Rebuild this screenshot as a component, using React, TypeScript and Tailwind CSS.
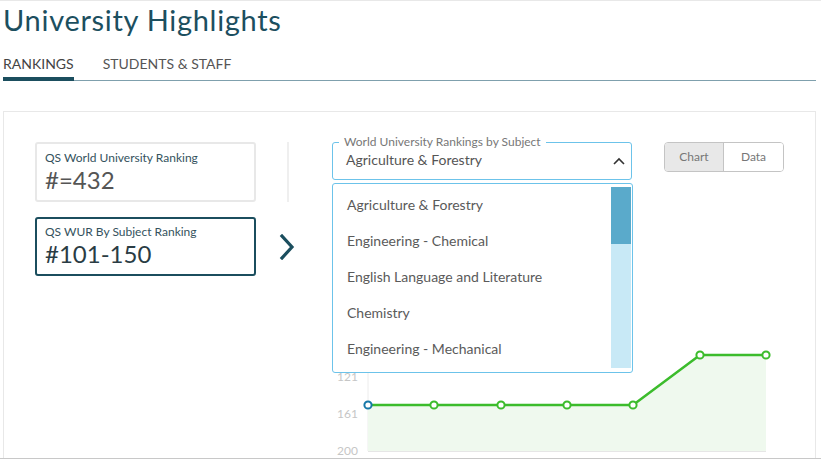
import { useState } from "react";

/* ------------------------------------------------------------------ */
/*  Data                                                               */
/* ------------------------------------------------------------------ */

const SUBJECTS = [
  "Agriculture & Forestry",
  "Engineering - Chemical",
  "English Language and Literature",
  "Chemistry",
  "Engineering - Mechanical",
];

const POINTS = [
  { x: 36, y: 215 },
  { x: 102, y: 215 },
  { x: 169, y: 215 },
  { x: 235, y: 215 },
  { x: 301, y: 215 },
  { x: 368, y: 165 },
  { x: 434, y: 165 },
];

const Y_LABELS = [
  { v: "1", y: 76 },
  { v: "41", y: 113 },
  { v: "81", y: 150 },
  { v: "121", y: 187 },
  { v: "161", y: 224 },
  { v: "200", y: 261 },
];

/* ------------------------------------------------------------------ */
/*  Component                                                          */
/* ------------------------------------------------------------------ */

export default function App() {
  const [tab, setTab] = useState("rankings");
  const [view, setView] = useState<"chart" | "data">("chart");
  const [subject, setSubject] = useState(SUBJECTS[0]);

  return (
    <div
      className="relative h-[459px] w-[821px] overflow-hidden border-t border-b border-t-[#e8e8e8] border-b-[#c8c8c8] bg-white"
      style={{ fontFamily: "Lato, 'Open Sans', sans-serif" }}
    >
      {/* Header */}
      <h1 className="pl-[3px] pt-[2px] text-[29px] leading-[34px] tracking-[0.7px] text-[#1c4f5f]">
        University Highlights
      </h1>

      {/* Tabs */}
      <div className="ml-[3px] mr-[5px] mt-[18px] flex border-b border-[#7fa0ad]">
        <TabBtn active={tab === "rankings"} onClick={() => setTab("rankings")}>
          RANKINGS
        </TabBtn>
        <div className="w-[29px]" />
        <TabBtn active={tab === "staff"} onClick={() => setTab("staff")}>
          STUDENTS &amp; STAFF
        </TabBtn>
      </div>

      {/* Panel */}
      <div className="ml-[3px] mt-[30px] h-[400px] w-[813px] border border-[#e8e8e8] px-[31px] pt-[30px]">
        <div className="flex">
          {/* Ranking cards */}
          <div className="flex w-[222px] flex-col gap-[15px]">
            <div className="h-[60px] rounded-[3px] border-2 border-[#e8e8e8] px-[8px] pt-[6px]">
              <div className="text-[12px] leading-[16px] text-[#34525d]">
                QS World University Ranking
              </div>
              <div className="text-[24px] leading-[28px] text-[#555]">#=432</div>
            </div>
            <div className="h-[59px] rounded-[3px] border-2 border-[#1b4e5e] px-[8px] pt-[5px]">
              <div className="text-[12px] leading-[16px] text-[#34525d]">
                QS WUR By Subject Ranking
              </div>
              <div className="text-[24px] leading-[28px] text-[#2a3c44]">#101-150</div>
            </div>
          </div>

          {/* Divider + arrow */}
          <div className="flex w-[76px] flex-col">
            <div className="ml-[31px] h-[60px] w-[2px] bg-[#efefef]" />
            <svg
              className="ml-[22px] mt-[32px]"
              width="18"
              height="26"
              viewBox="0 0 18 26"
              fill="none"
            >
              <path
                d="M4 2 L14 13 L4 24"
                stroke="#1b4e5e"
                strokeWidth="3.2"
                strokeLinecap="square"
              />
            </svg>
          </div>

          {/* Right column */}
          <div className="relative flex flex-1 flex-col">
            <div className="flex items-start justify-between">
              {/* Select */}
              <div className="relative h-[38px] w-[300px] rounded-[3px] border border-[#6cc3ea] px-[13px] pt-[8px]">
                <span className="absolute -top-[9px] left-[6px] bg-white px-[5px] text-[12px] leading-[15px] text-[#777]">
                  World University Rankings by Subject
                </span>
                <div className="text-[14px] leading-[18px] text-[#555]">{subject}</div>
                <svg
                  className="absolute right-[5px] top-[14px]"
                  width="14"
                  height="9"
                  viewBox="0 0 14 9"
                  fill="none"
                >
                  <path d="M2 7 L7 2 L12 7" stroke="#333" strokeWidth="1.6" />
                </svg>
              </div>

              {/* Chart / Data toggle */}
              <div className="flex h-[30px] overflow-hidden rounded-[4px] border border-[#c4c4c4] text-[12px] text-[#777]">
                <button
                  type="button"
                  onClick={() => setView("chart")}
                  className={`w-[59px] border-r border-[#c4c4c4] ${view === "chart" ? "bg-[#e8e8e8]" : "bg-white"}`}
                >
                  Chart
                </button>
                <button
                  type="button"
                  onClick={() => setView("data")}
                  className={`w-[59px] ${view === "data" ? "bg-[#e8e8e8]" : "bg-white"}`}
                >
                  Data
                </button>
              </div>
            </div>

            {/* Chart */}
            <svg className="mt-[10px]" width="452" height="270" viewBox="0 0 452 270">
              <line x1="36" y1="60" x2="36" y2="261" stroke="#ececec" strokeWidth="1" />
              <polygon
                points={`36,261 ${POINTS.map((p) => `${p.x},${p.y}`).join(" ")} 434,261`}
                fill="#eff9ee"
              />
              <line x1="36" y1="261.5" x2="434" y2="261.5" stroke="#e6e6e6" strokeWidth="1" />
              {Y_LABELS.map((l) => (
                <text
                  key={l.v}
                  x="26"
                  y={l.y + 4}
                  textAnchor="end"
                  fontSize="12"
                  fill="#c6c6c6"
                  fontFamily="Lato, sans-serif"
                >
                  {l.v}
                </text>
              ))}
              <polyline
                points={POINTS.map((p) => `${p.x},${p.y}`).join(" ")}
                fill="none"
                stroke="#3cbc2c"
                strokeWidth="2.5"
              />
              {POINTS.map((p, i) => (
                <circle
                  key={i}
                  cx={p.x}
                  cy={p.y}
                  r="3.6"
                  fill="#fff"
                  stroke={i === 0 ? "#1678a8" : "#3cbc2c"}
                  strokeWidth="2"
                />
              ))}
            </svg>

            {/* Dropdown list */}
            <div className="absolute left-0 top-[41px] flex h-[190px] w-[301px] overflow-hidden rounded-[3px] border border-[#6cc3ea] bg-white">
              <ul className="flex-1 pt-[2px]">
                {SUBJECTS.map((s) => (
                  <li
                    key={s}
                    onClick={() => setSubject(s)}
                    className="flex h-[36px] cursor-pointer items-center pl-[14px] text-[14px] text-[#5a5a5a]"
                  >
                    {s}
                  </li>
                ))}
              </ul>
              <div className="mr-[1px] mt-[3px] flex h-[181px] w-[20px] flex-col bg-[#c8e9f6]">
                <div className="h-[57px] bg-[#5aaacb]" />
              </div>
            </div>
          </div>
        </div>
      </div>
    </div>
  );
}

/* ── Sub-components ── */

function TabBtn({
  children,
  active,
  onClick,
}: {
  children: React.ReactNode;
  active: boolean;
  onClick: () => void;
}) {
  return (
    <button
      type="button"
      onClick={onClick}
      className={`-mb-px border-b-4 pb-[4px] text-[14px] leading-[18px] ${active ? "border-[#1b4e5e] text-[#444]" : "border-transparent text-[#555]"}`}
    >
      {children}
    </button>
  );
}
